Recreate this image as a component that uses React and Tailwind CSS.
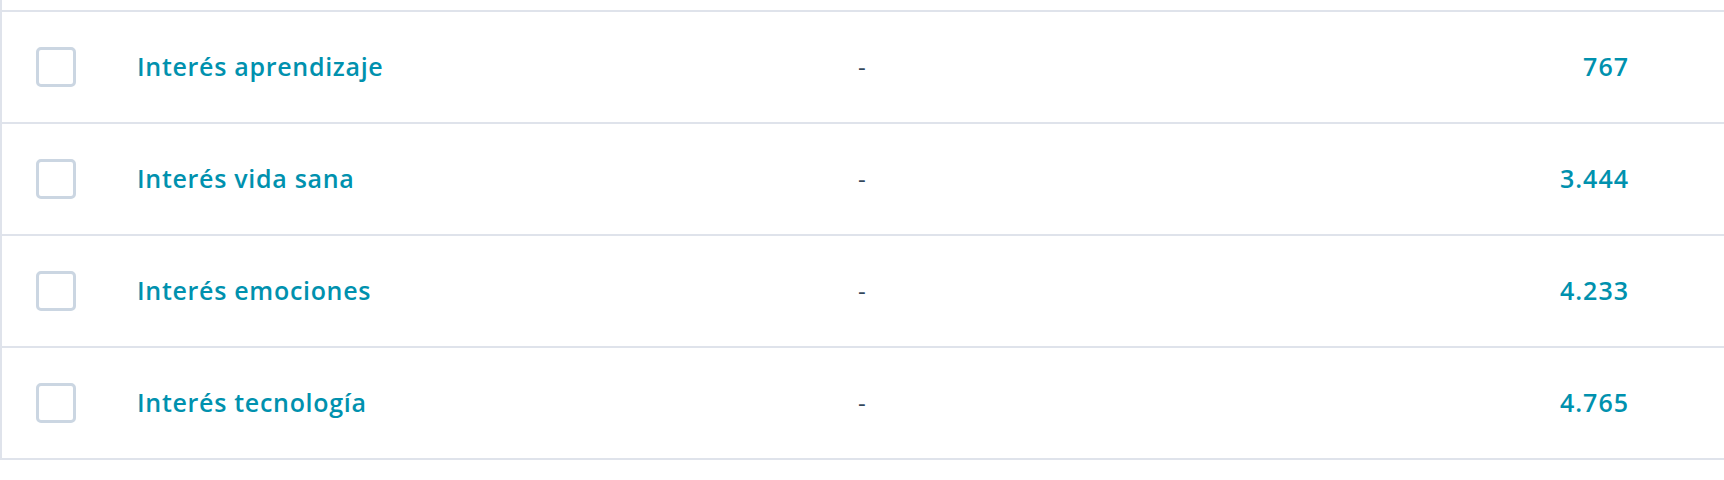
const rows = [
  { name: "Interés aprendizaje", value: "767" },
  { name: "Interés vida sana", value: "3.444" },
  { name: "Interés emociones", value: "4.233" },
  { name: "Interés tecnología", value: "4.765" },
];

function Row({ name, value }) {
  return (
    <div className="flex h-[112px] items-center border-b-2 border-[#dfe3eb]">
      <div className="w-[135px] shrink-0 pl-[34px]">
        <div className="h-10 w-10 rounded-[5px] border-[3px] border-[#cbd6e2] bg-white" />
      </div>
      <div className="w-[721px] shrink-0 text-[25px] font-semibold tracking-[0.7px] text-[#0091ae]">{name}</div>
      <div className="flex-1 text-[24px] text-[#33475b]">-</div>
      <div className="pr-[95px] text-right text-[25px] font-semibold tracking-[1px] text-[#0091ae]">{value}</div>
    </div>
  );
}

export default function App() {
  return (
    <div className="h-[480px] w-full bg-white font-['Open_Sans',sans-serif]">
      <div className="border-l-2 border-[#dfe3eb]">
        <div className="h-[12px] border-b-2 border-[#dfe3eb]" />
        {rows.map((r) => (
          <Row key={r.name} {...r} />
        ))}
      </div>
    </div>
  );
}
